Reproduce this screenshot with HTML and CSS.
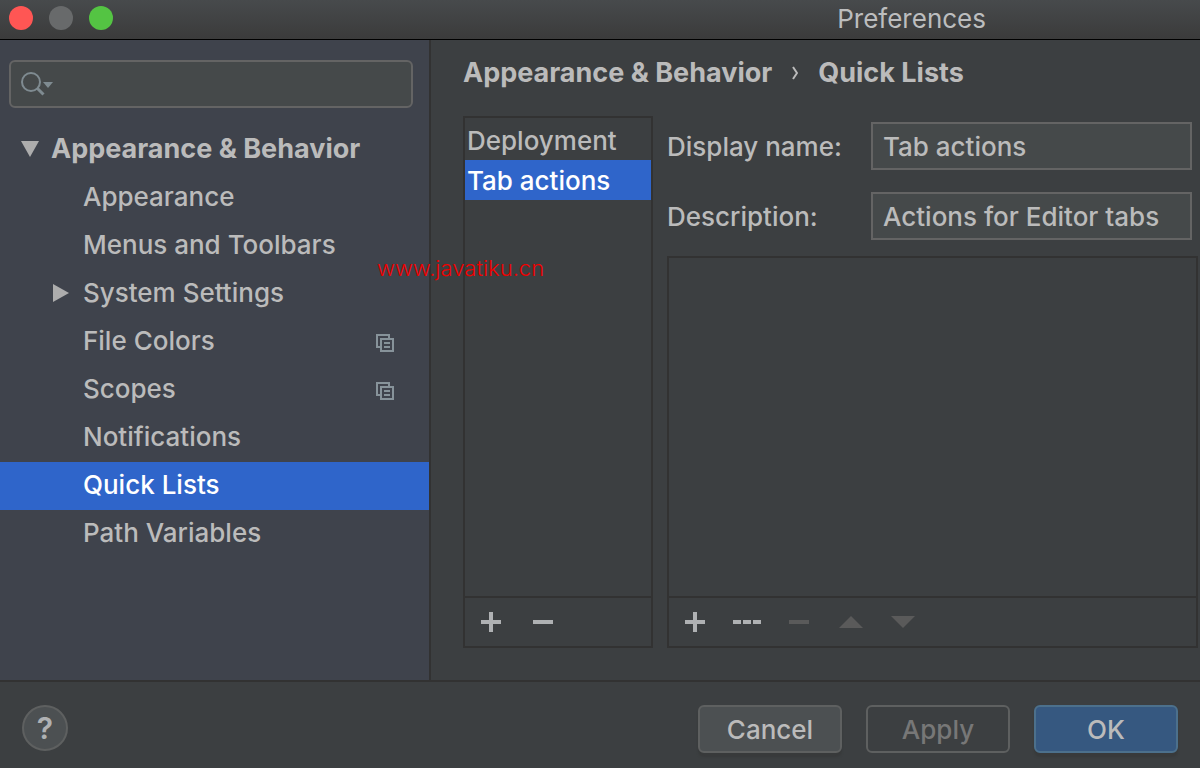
FILE: index.html
```
<!DOCTYPE html>
<html lang="en">
<head>
    <meta charset="UTF-8">
    <meta name="viewport" content="width=device-width, initial-scale=1.0">
    <title>Preferences</title>
    <link rel="stylesheet" href="styles.css">
</head>
<body>
    <div class="window">
        <header class="titlebar">
            <div class="lights">
                <button class="light close" type="button" aria-label="Close"></button>
                <button class="light minimize" type="button" aria-label="Minimize" disabled></button>
                <button class="light zoom" type="button" aria-label="Zoom"></button>
            </div>
            <h1>Preferences</h1>
        </header>

        <div class="content">
            <aside class="sidebar">
                <label class="search">
                    <svg width="34" height="26" viewBox="0 0 34 26" aria-hidden="true">
                        <circle cx="11" cy="11" r="9" fill="none" stroke="#7f8b91" stroke-width="2"/>
                        <path d="M17 17l6.5 6.5" stroke="#7f8b91" stroke-width="3"/>
                        <path d="M23 11h10l-5 6z" fill="#7f8b91"/>
                    </svg>
                    <input type="text" aria-label="Search settings">
                </label>

                <nav>
                    <ul class="tree">
                        <li>
                            <a class="group" href="#">
                                <svg width="18" height="16" viewBox="0 0 18 16" aria-hidden="true"><path d="M0 0h18L9 16z" fill="#adadad"/></svg>
                                Appearance &amp; Behavior
                            </a>
                        </li>
                        <li><a href="#">Appearance</a></li>
                        <li><a href="#">Menus and Toolbars</a></li>
                        <li>
                            <a class="closed" href="#">
                                <svg width="16" height="18" viewBox="0 0 16 18" aria-hidden="true"><path d="M0 0v18l16-9z" fill="#adadad"/></svg>
                                System Settings
                            </a>
                        </li>
                        <li>
                            <a href="#">File Colors
                                <svg class="project" width="18" height="18" viewBox="0 0 18 18" aria-hidden="true"><path d="M0 0h14v4h-2V2H2v10h2v2H0zM4 4h14v14H4zM6 6v10h10V6zM8 8h6v2H8zM8 12h6v2H8z" fill="#87939a" fill-rule="evenodd"/></svg>
                            </a>
                        </li>
                        <li>
                            <a href="#">Scopes
                                <svg class="project" width="18" height="18" viewBox="0 0 18 18" aria-hidden="true"><path d="M0 0h14v4h-2V2H2v10h2v2H0zM4 4h14v14H4zM6 6v10h10V6zM8 8h6v2H8zM8 12h6v2H8z" fill="#87939a" fill-rule="evenodd"/></svg>
                            </a>
                        </li>
                        <li><a href="#">Notifications</a></li>
                        <li><a class="selected" href="#" aria-current="page">Quick Lists</a></li>
                        <li><a href="#">Path Variables</a></li>
                    </ul>
                </nav>
            </aside>

            <main class="page">
                <h2 class="breadcrumb">
                    <a href="#">Appearance &amp; Behavior</a>
                    <svg width="6" height="14" viewBox="0 0 6 14" aria-hidden="true"><path d="M1 1l4 6-4 6" fill="none" stroke="#bbbbbb" stroke-width="2"/></svg>
                    <span>Quick Lists</span>
                </h2>

                <div class="panels">
                    <section class="panel lists">
                        <ul class="items" role="listbox" aria-label="Quick lists">
                            <li role="option" aria-selected="false">Deployment</li>
                            <li class="selected" role="option" aria-selected="true">Tab actions</li>
                        </ul>
                        <div class="toolbar">
                            <button type="button" aria-label="Add list"><svg width="20" height="20" viewBox="0 0 20 20"><path d="M8 0h4v8h8v4h-8v8H8v-8H0V8h8z"/></svg></button>
                            <button type="button" aria-label="Remove list"><svg width="20" height="20" viewBox="0 0 20 20"><path d="M0 8h20v4H0z"/></svg></button>
                        </div>
                    </section>

                    <section class="details">
                        <form class="fields">
                            <label for="displayName">Display name:</label>
                            <input type="text" id="displayName" value="Tab actions">
                            <label for="description">Description:</label>
                            <input type="text" id="description" value="Actions for Editor tabs">
                        </form>
                        <div class="panel actions">
                            <ul class="items" role="listbox" aria-label="Actions"></ul>
                            <div class="toolbar">
                                <button type="button" aria-label="Add action"><svg width="20" height="20" viewBox="0 0 20 20"><path d="M8 0h4v8h8v4h-8v8H8v-8H0V8h8z"/></svg></button>
                                <button type="button" aria-label="Add separator"><svg width="28" height="20" viewBox="0 0 28 20"><path d="M0 8h8v4H0zM10 8h8v4h-8zM20 8h8v4h-8z"/></svg></button>
                                <button type="button" aria-label="Remove action" disabled><svg width="20" height="20" viewBox="0 0 20 20"><path d="M0 8h20v4H0z"/></svg></button>
                                <button type="button" aria-label="Move up" disabled><svg width="24" height="20" viewBox="0 0 24 20"><path d="M0 16h24L12 4z"/></svg></button>
                                <button type="button" aria-label="Move down" disabled><svg width="24" height="20" viewBox="0 0 24 20"><path d="M0 4h24L12 16z"/></svg></button>
                            </div>
                        </div>
                    </section>
                </div>
            </main>
        </div>

        <footer class="footer">
            <button class="help" type="button" aria-label="Help">?</button>
            <button class="btn" type="button">Cancel</button>
            <button class="btn apply" type="button" disabled>Apply</button>
            <button class="btn ok" type="button">OK</button>
        </footer>

        <div class="watermark">www.javatiku.cn</div>
    </div>
</body>
</html>
```
FILE: styles.css
```
* {
    box-sizing: border-box;
}

body {
    margin: 0;
    font-family: Inter, "Liberation Sans", sans-serif;
    font-size: 26px;
    font-weight: 500;
    line-height: 40px;
    color: #bbbbbb;
    background: #3c3f41;
}

ul {
    list-style: none;
    margin: 0;
    padding: 0;
}

a {
    color: inherit;
    text-decoration: none;
}

button, input {
    font: inherit;
    color: inherit;
}

svg {
    display: block;
    flex: none;
}

.window {
    position: relative;
    min-height: 100vh;
    display: flex;
    flex-direction: column;
}

.titlebar {
    height: 40px;
    padding: 0 214px 4px 9px;
    display: flex;
    align-items: center;
    justify-content: space-between;
    background: linear-gradient(#474a4c, #3b3b3b);
    border-bottom: 1px solid #000;
}

.titlebar h1 {
    margin: 0;
    padding-top: 2px;
    font-size: 26px;
    font-weight: 400;
    color: #bcbdbe;
}

.lights {
    display: flex;
    gap: 16px;
}

.light {
    width: 24px;
    height: 24px;
    padding: 0;
    border: none;
    border-radius: 50%;
}

.close {
    background: #ff5654;
}

.minimize {
    background: #686a6b;
}

.zoom {
    background: #54c443;
}

.content {
    flex: 1;
    display: flex;
    border-bottom: 2px solid #323232;
}

.sidebar {
    flex: none;
    width: 431px;
    padding-top: 20px;
    background: #3f434c;
    border-right: 2px solid #323232;
}

.search {
    display: flex;
    align-items: center;
    height: 48px;
    margin: 0 16px 18px 9px;
    padding: 0 9px;
    background: #45494a;
    border: 2px solid #646464;
    border-radius: 6px;
}

.search input {
    flex: 1;
    min-width: 0;
    margin-left: 8px;
    padding: 0;
    background: none;
    border: none;
    outline: none;
}

.tree a {
    display: flex;
    align-items: center;
    height: 48px;
    padding: 0 35px 2px 83px;
}

.tree .group {
    gap: 12px;
    padding-left: 21px;
    font-size: 27px;
    font-weight: 700;
}

.tree .closed {
    gap: 14px;
    padding-left: 53px;
}

.tree .project {
    margin: 4px 0 0 auto;
}

.selected {
    color: #fff;
    background: #2f65ca;
}

.page {
    flex: 1;
    min-width: 0;
    display: flex;
    flex-direction: column;
    padding: 13px 2px 32px 32px;
}

.breadcrumb {
    display: flex;
    align-items: center;
    gap: 20px;
    margin: 0 0 23px;
    font-size: 27px;
    font-weight: 700;
}

.panels {
    flex: 1;
    display: flex;
    gap: 14px;
}

.panel {
    display: flex;
    flex-direction: column;
    border: 2px solid #323232;
}

.lists {
    flex: none;
    width: 190px;
}

.items {
    flex: 1;
    padding-top: 2px;
}

.items li {
    height: 40px;
    padding: 1px 0 0 2px;
}

.toolbar {
    display: flex;
    height: 50px;
    border-top: 2px solid #323232;
}

.toolbar button {
    display: flex;
    align-items: center;
    justify-content: center;
    width: 52px;
    padding: 0;
    background: none;
    border: none;
    fill: #afb1b3;
}

.toolbar button:disabled {
    fill: #5a5a5a;
}

.details {
    flex: 1;
    min-width: 0;
    display: flex;
    flex-direction: column;
    padding-top: 6px;
}

.fields {
    display: grid;
    grid-template-columns: 190px 1fr;
    gap: 22px 14px;
    align-items: center;
    margin: 0 6px 16px 0;
}

.fields label {
    padding-top: 2px;
}

.fields input {
    width: 100%;
    min-width: 0;
    height: 48px;
    padding: 0 10px;
    background: #45494a;
    border: 2px solid #646464;
    outline: none;
}

.actions {
    flex: 1;
}

.footer {
    display: flex;
    gap: 24px;
    padding: 23px 22px 15px;
}

.help {
    width: 46px;
    height: 46px;
    margin-right: auto;
    padding: 0;
    font-size: 30px;
    font-weight: 600;
    color: #afb1b3;
    background: #4c5052;
    border: 2px solid #5e6060;
    border-radius: 50%;
}

.btn {
    width: 144px;
    height: 48px;
    padding: 2px 0 0;
    background: #4c5052;
    border: 2px solid #5e6060;
    border-radius: 6px;
    box-shadow: 0 4px 2px #383a3b;
}

.apply {
    color: #777777;
    background: none;
    box-shadow: none;
}

.ok {
    background: #365880;
    border-color: #4c708c;
}

.watermark {
    position: absolute;
    top: 248px;
    left: 377px;
    font-size: 22px;
    font-weight: 300;
    color: #f00000;
    pointer-events: none;
}
```
